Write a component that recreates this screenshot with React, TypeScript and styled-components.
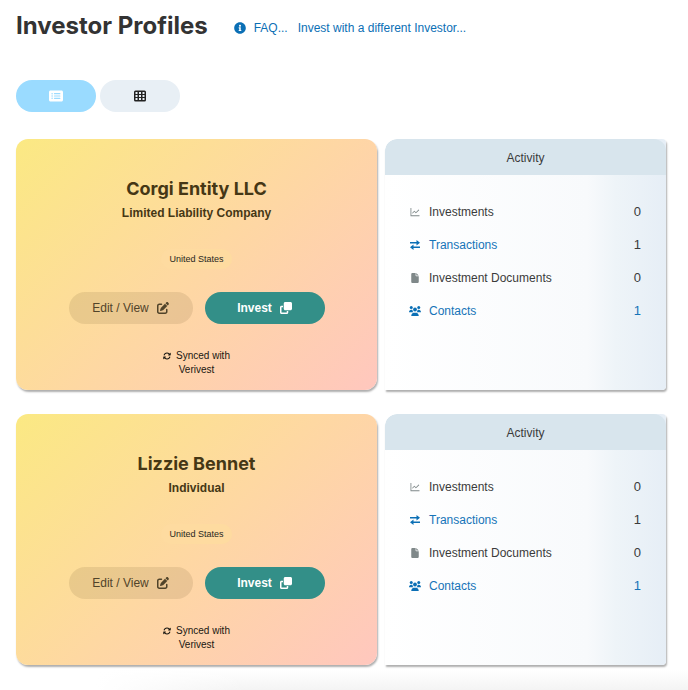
import React from "react";
import styled, { createGlobalStyle, css } from "styled-components";
import { FaArrowsRotate, FaClone, FaFile, FaPenToSquare, FaRectangleList } from "react-icons/fa6";
import { FaInfoCircle } from "react-icons/fa";
import { AiOutlineLineChart } from "react-icons/ai";

const GlobalStyle = createGlobalStyle`
  * { box-sizing: border-box; }
  body {
    margin: 0;
    background: #fff;
    color: #3b3b3b;
    font-family: "Liberation Sans", Arial, sans-serif;
    font-size: 12px;
    line-height: 16px;
  }
  h1, h2, h3, p, ul { margin: 0; padding: 0; }
  button { font: inherit; border: 0; cursor: pointer; }
  svg { display: block; flex: none; }
`;

const Page = styled.main`
  padding: 8px 22px 0 16px;
`;

const Header = styled.header`
  display: flex;
  align-items: center;
  height: 36px;
`;

const Title = styled.h1`
  font-family: Inter, "Liberation Sans", sans-serif;
  font-size: 24px;
  line-height: 36px;
  font-weight: 700;
  color: #333;
  white-space: nowrap;
`;

const HeaderLinks = styled.nav`
  display: flex;
  align-items: center;
  gap: 10px;
  margin-left: 26px;
  padding-top: 4px;
  white-space: nowrap;
`;

const HeaderLink = styled.a`
  display: flex;
  align-items: center;
  gap: 8px;
  font-size: 12px;
  color: #0b6fb5;
  text-decoration: none;
`;

const ViewSwitch = styled.div`
  display: flex;
  gap: 4px;
  margin-top: 36px;
`;

const ViewButton = styled.button<{ $active?: boolean }>`
  display: flex;
  align-items: center;
  justify-content: center;
  width: 80px;
  height: 32px;
  border-radius: 16px;
  background: ${(p) => (p.$active ? "#9adbff" : "#e8eff5")};
  color: ${(p) => (p.$active ? "#fff" : "#222")};
`;

const Profiles = styled.div`
  display: grid;
  gap: 24px;
  margin-top: 27px;
`;

const Profile = styled.section`
  display: grid;
  grid-template-columns: minmax(0, 361fr) minmax(0, 281fr);
  gap: 8px;
  min-height: 251px;
`;

const Identity = styled.article`
  display: flex;
  flex-direction: column;
  align-items: center;
  padding: 38px 16px 12px;
  border-radius: 12px;
  background: linear-gradient(135deg, #fbe983 0%, #fed8a2 50%, #ffc7be 100%);
  box-shadow: 1px 2px 2px rgba(0, 0, 0, 0.32);
  color: #453715;
  text-align: center;
`;

const Name = styled.h2`
  font-family: Inter, "Liberation Sans", sans-serif;
  font-size: 18px;
  line-height: 24px;
  font-weight: 700;
`;

const Kind = styled.h3`
  margin-top: 4px;
  font-size: 12px;
  line-height: 16px;
  font-weight: 700;
`;

const Country = styled.span`
  margin-top: 28px;
  padding: 0 8px;
  border-radius: 10px;
  background: #fedba0;
  font-size: 9px;
  line-height: 20px;
  color: #292820;
`;

const Actions = styled.div`
  display: flex;
  gap: 12px;
  margin-top: 23px;
`;

const Action = styled.button<{ $primary?: boolean }>`
  display: flex;
  align-items: center;
  justify-content: center;
  gap: 8px;
  height: 32px;
  border-radius: 16px;
  ${(p) =>
    p.$primary
      ? css`
          width: 120px;
          background: #338f88;
          color: #fff;
          font-weight: 700;
        `
      : css`
          width: 124px;
          background: rgba(69, 55, 21, 0.11);
          color: #51442a;
        `}
`;

const Synced = styled.p`
  width: 72px;
  margin-top: 25px;
  font-size: 10px;
  line-height: 14px;
  color: #191711;
  svg {
    display: inline-block;
    margin-right: 5px;
    vertical-align: -1px;
  }
`;

const Activity = styled.article`
  overflow: hidden;
  border-radius: 12px 4px 4px 0;
  background: linear-gradient(90deg, #fff 0%, #f8fafc 72%, #eef4f8 82%, #e6eef6 100%);
  box-shadow: 1px 2px 2px rgba(0, 0, 0, 0.32);
`;

const ActivityTitle = styled.h3`
  height: 36px;
  border-radius: 12px 12px 0 0;
  background: #d8e5ed;
  font-size: 12px;
  line-height: 38px;
  font-weight: 400;
  text-align: center;
`;

const ActivityList = styled.ul`
  padding: 20px 25px 0 24px;
  list-style: none;
`;

const ActivityRow = styled.li`
  display: flex;
  align-items: center;
  height: 33px;
`;

const ActivityIcon = styled.span<{ $linked?: boolean }>`
  display: flex;
  justify-content: center;
  width: 12px;
  margin-right: 8px;
  color: ${(p) => (p.$linked ? "#0b6fb5" : "#7f8889")};
`;

const ActivityLink = styled.a`
  color: #1674b8;
  text-decoration: none;
`;

const Count = styled.span<{ $linked?: boolean }>`
  margin-left: auto;
  font-size: 13px;
  color: ${(p) => (p.$linked ? "#1674b8" : "#3b3b3b")};
`;

const FooterShade = styled.div`
  height: 24px;
  margin: 1px -22px 0 -16px;
  background: linear-gradient(90deg, #fff 14%, rgba(255, 255, 255, 0) 36%),
    linear-gradient(180deg, #fff 15%, #f4f4f4 100%);
`;

function GridIcon() {
  return (
    <svg width="12" height="12" viewBox="0 0 24 24" fill="currentColor" aria-hidden="true">
      <path
        fillRule="evenodd"
        d="M3 1h18a3 3 0 0 1 3 3v16a3 3 0 0 1-3 3H3a3 3 0 0 1-3-3V4a3 3 0 0 1 3-3zM3 4v4h4V4zm7 0v4h4V4zm7 0v4h4V4zM3 10v4h4v-4zm7 0v4h4v-4zm7 0v4h4v-4zM3 16v4h4v-4zm7 0v4h4v-4zm7 0v4h4v-4z"
      />
    </svg>
  );
}

function TransferIcon() {
  return (
    <svg width="12" height="12" viewBox="0 0 24 24" fill="currentColor" aria-hidden="true">
      <path d="M2 6h13V2l7 5.5-7 5.5V9H2zM22 15H9v-4l-7 5.5L9 22v-4h13z" />
    </svg>
  );
}

function PeopleIcon() {
  return (
    <svg width="12" height="12" viewBox="0 0 24 24" fill="currentColor" aria-hidden="true">
      <circle cx="4.5" cy="5" r="3" />
      <circle cx="19.5" cy="5" r="3" />
      <circle cx="12" cy="9" r="3.8" />
      <path d="M0 14.5C0 11.5 1.8 9.5 4.5 9.5c1.2 0 2 .3 2.6.8 0 1.8.7 3 1.8 4.2zM24 14.5c0-3-1.8-5-4.5-5-1.2 0-2 .3-2.6.8 0 1.8-.7 3-1.8 4.2zM4.5 22c0-4 2.2-6.5 5.5-6.5h4c3.3 0 5.500 2.500 5.500 6.500z" />
    </svg>
  );
}

type Row = { label: string; count: number; icon: React.ReactNode; href?: string; countLinked?: boolean };

const rows: Row[] = [
  { label: "Investments", count: 0, icon: <AiOutlineLineChart size={12} /> },
  { label: "Transactions", count: 1, icon: <TransferIcon />, href: "#transactions" },
  { label: "Investment Documents", count: 0, icon: <FaFile size={10} /> },
  { label: "Contacts", count: 1, icon: <PeopleIcon />, href: "#contacts", countLinked: true },
];

const profiles = [
  { name: "Corgi Entity LLC", kind: "Limited Liability Company", country: "United States" },
  { name: "Lizzie Bennet", kind: "Individual", country: "United States" },
];

export default function App() {
  return (
    <>
      <GlobalStyle />
      <Page>
        <Header>
          <Title>Investor Profiles</Title>
          <HeaderLinks>
            <HeaderLink href="#faq">
              <FaInfoCircle size={12} />
              FAQ...
            </HeaderLink>
            <HeaderLink href="#invest">Invest with a different Investor...</HeaderLink>
          </HeaderLinks>
        </Header>
        <ViewSwitch>
          <ViewButton $active aria-label="List view" aria-pressed>
            <FaRectangleList size={14} />
          </ViewButton>
          <ViewButton aria-label="Table view" aria-pressed={false}>
            <GridIcon />
          </ViewButton>
        </ViewSwitch>
        <Profiles>
          {profiles.map((profile) => (
            <Profile key={profile.name}>
              <Identity>
                <Name>{profile.name}</Name>
                <Kind>{profile.kind}</Kind>
                <Country>{profile.country}</Country>
                <Actions>
                  <Action>
                    Edit / View
                    <FaPenToSquare size={12} />
                  </Action>
                  <Action $primary>
                    Invest
                    <FaClone size={12} />
                  </Action>
                </Actions>
                <Synced>
                  <FaArrowsRotate size={8} />
                  Synced with Verivest
                </Synced>
              </Identity>
              <Activity>
                <ActivityTitle>Activity</ActivityTitle>
                <ActivityList>
                  {rows.map((row) => (
                    <ActivityRow key={row.label}>
                      <ActivityIcon $linked={!!row.href}>{row.icon}</ActivityIcon>
                      {row.href ? <ActivityLink href={row.href}>{row.label}</ActivityLink> : row.label}
                      <Count $linked={row.countLinked}>{row.count}</Count>
                    </ActivityRow>
                  ))}
                </ActivityList>
              </Activity>
            </Profile>
          ))}
        </Profiles>
        <FooterShade />
      </Page>
    </>
  );
}
